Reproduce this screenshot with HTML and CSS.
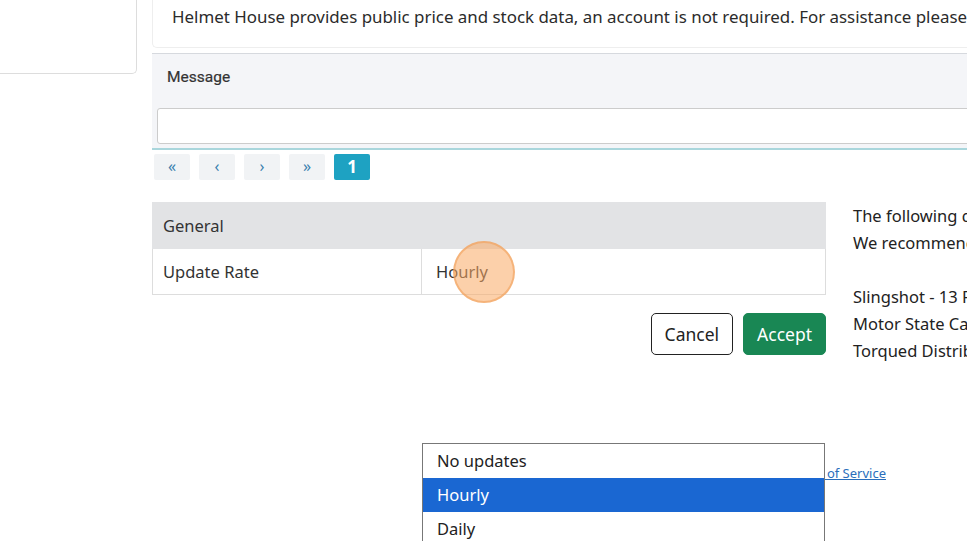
FILE: index.html
```html
<!DOCTYPE html>
<html>

<head>
    <title>Helmet House - Data Feed</title>
    <meta charset="UTF-8">
    <link rel="stylesheet" href="styles.css">
</head>

<body>
    <div class="page">
        <div class="sidebar">
            <div class="side-card"></div>
        </div>
        <div class="main">
            <div class="notice">
                Helmet House provides public price and stock data, an account is not required. For assistance please contact us.
            </div>
            <div class="message-panel">
                <div class="message-title">Message</div>
                <input type="text" class="message-input" />
            </div>
            <div class="pager">
                <span class="page-btn">&laquo;</span>
                <span class="page-btn">&lsaquo;</span>
                <span class="page-btn">&rsaquo;</span>
                <span class="page-btn">&raquo;</span>
                <span class="page-btn active">1</span>
            </div>
            <div class="lower">
                <div class="settings">
                    <table class="settings-table">
                        <tr>
                            <th colspan="2">General</th>
                        </tr>
                        <tr>
                            <td class="label-cell">Update Rate</td>
                            <td class="value-cell">
                                Hourly
                                <span class="click-dot"></span>
                                <div class="dropdown">
                                    <div class="option">No updates</div>
                                    <div class="option selected">Hourly</div>
                                    <div class="option">Daily</div>
                                </div>
                            </td>
                        </tr>
                    </table>
                    <div class="actions">
                        <button class="btn btn-cancel">Cancel</button>
                        <button class="btn btn-accept">Accept</button>
                    </div>
                    <div class="footer">
                        <a href="#">Terms of Service</a>
                    </div>
                </div>
                <div class="info">
                    <p>The following distributors provide data feeds.<br>We recommend contacting them directly.</p>
                    <p>Slingshot - 13 Feeds<br>Motor State Cascade<br>Torqued Distribution</p>
                </div>
            </div>
        </div>
    </div>
</body>

</html>
```

FILE: styles.css
```css
html, body {
    margin: 0;
    padding: 0;
    overflow: hidden;
    background-color: #fff;
}

body {
    font-family: "Noto Sans", "Open Sans", sans-serif;
    color: #222;
    width: 967px;
    height: 541px;
}

.page {
    display: flex;
    align-items: flex-start;
}

.sidebar {
    width: 137px;
    flex-shrink: 0;
}

.side-card {
    height: 73px;
    border-right: 1px solid #ddd;
    border-bottom: 1px solid #ddd;
    border-bottom-right-radius: 5px;
}

.main {
    margin-left: 15px;
    width: 1000px;
    flex-shrink: 0;
}

.notice {
    height: 48px;
    box-sizing: border-box;
    border-left: 1px solid #eee;
    border-bottom: 1px solid #eee;
    border-bottom-left-radius: 5px;
    padding: 5px 0 0 19px;
    font-size: 16.9px;
    color: #2b2b2b;
    white-space: nowrap;
    overflow: hidden;
}

.message-panel {
    margin-top: 5px;
    height: 97px;
    box-sizing: border-box;
    background-color: #f4f5f8;
    border-top: 1px solid #d6d9de;
    border-bottom: 2px solid #a9d6dc;
    padding: 13px 0 0 5px;
}

.message-title {
    font-family: Roboto, sans-serif;
    font-weight: normal;
    font-size: 15.5px;
    color: #333;
    padding: 1px 0 0 10px;
    height: 40px;
    -webkit-text-stroke: 0.2px #333;
}

.message-input {
    display: block;
    width: 100%;
    height: 36px;
    box-sizing: border-box;
    border: 1px solid #ccc;
    border-radius: 3px;
    background-color: #fff;
}

.pager {
    display: flex;
    margin-top: 4px;
    padding-left: 2px;
}

.page-btn {
    width: 36px;
    height: 26px;
    line-height: 25px;
    text-align: center;
    background-color: #f1f3f5;
    color: #3a7fae;
    font-size: 16px;
    border-radius: 2px;
    margin-right: 9px;
}

.page-btn.active {
    background-color: #1ea2c2;
    color: #fff;
    font-weight: bold;
    font-size: 17px;
}

.lower {
    display: flex;
    margin-top: 22px;
}

.settings {
    width: 674px;
    flex-shrink: 0;
}

.settings-table {
    width: 100%;
    border-collapse: collapse;
    font-size: 16.5px;
    color: #333;
}

.settings-table th {
    background-color: #e2e3e5;
    text-align: left;
    font-weight: normal;
    height: 45px;
    padding: 0 10px;
    border: 1px solid #e2e3e5;
}

.settings-table td {
    height: 45px;
    padding: 0 10px;
    border: 1px solid #ddd;
}

.label-cell {
    width: 248px;
}

.value-cell {
    position: relative;
    padding-left: 14px !important;
}

.click-dot {
    position: absolute;
    left: 31px;
    top: -8px;
    width: 58px;
    height: 58px;
    border-radius: 50%;
    background-color: rgba(249, 170, 100, 0.55);
    border: 2px solid rgba(240, 160, 90, 0.6);
}

.dropdown {
    position: absolute;
    left: 0;
    top: 194px;
    width: 403px;
    box-sizing: border-box;
    background-color: #fff;
    border: 1px solid #777;
    z-index: 5;
}

.option {
    height: 34px;
    line-height: 33px;
    padding-left: 14px;
    font-size: 16.5px;
    color: #222;
}

.option.selected {
    background-color: #1a67d2;
    color: #fff;
}

.actions {
    display: flex;
    justify-content: flex-end;
    margin-top: 18px;
    gap: 10px;
}

.btn {
    font-family: "Noto Sans", "Open Sans", sans-serif;
    font-size: 17.5px;
    height: 42px;
    padding: 0 13px;
    border-radius: 5px;
    cursor: pointer;
}

.btn-cancel {
    background-color: #fff;
    border: 1px solid #222;
    color: #222;
}

.btn-accept {
    background-color: #198754;
    border: 1px solid #198754;
    color: #fff;
}

.footer {
    text-align: right;
    margin-top: 106px;
    margin-right: -60px;
}

.footer a {
    font-size: 13px;
    color: #2a6ebb;
}

.info {
    margin-left: 27px;
    font-size: 16.5px;
    color: #222;
    white-space: nowrap;
}

.info p {
    margin: 0 0 27px 0;
    line-height: 27px;
}
```
